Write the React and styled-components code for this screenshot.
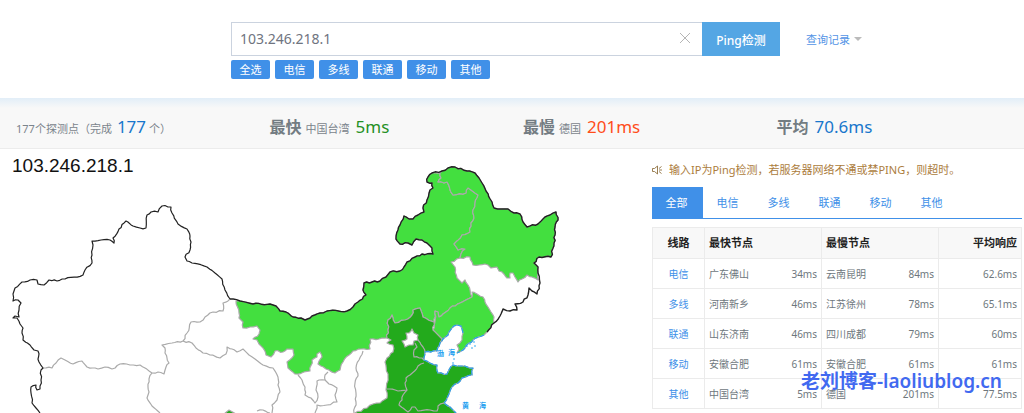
import React from "react";
import styled, { createGlobalStyle } from "styled-components";

const GlobalStyle = createGlobalStyle`
  * {
    box-sizing: border-box;
  }
  body {
    margin: 0;
    background: #fff;
    color: #7b848c;
    font-family: "Noto Sans", "Noto Sans CJK SC", sans-serif;
    font-size: 11px;
  }
  button,
  input {
    font-family: inherit;
  }
`;

const Header = styled.header`
  padding: 22px 16px 19px 231px;
`;

const SearchRow = styled.form`
  display: flex;
  align-items: center;
`;

const InputBox = styled.div`
  display: flex;
  align-items: center;
  flex: 0 1 471px;
  height: 34px;
  border: 1px solid #cbd3df;
  border-right: 0;
`;

const HostInput = styled.input`
  flex: 1;
  min-width: 0;
  height: 32px;
  padding: 0 8px 2px;
  border: 0;
  outline: none;
  background: none;
  color: #6f7480;
  font-size: 14px;
`;

const ClearButton = styled.button`
  display: flex;
  padding: 0 0 2px;
  margin-right: 11px;
  border: 0;
  background: none;
  cursor: pointer;
`;

const PingButton = styled.button`
  width: 78px;
  height: 34px;
  padding: 2px 0 0;
  border: 0;
  background: #54a6e4;
  color: #fff;
  font-size: 12px;
  font-weight: 500;
  cursor: pointer;
`;

const HistoryLink = styled.a`
  display: flex;
  align-items: center;
  gap: 4px;
  margin-left: 26px;
  color: #5394e6;
  text-decoration: none;

  &::after {
    content: "";
    border: 4px solid transparent;
    border-top-color: #bbb;
    border-bottom: 0;
  }
`;

const Tags = styled.div`
  display: flex;
  gap: 5px;
  margin-top: 4px;
`;

const Tag = styled.button`
  width: 39px;
  height: 19px;
  padding: 0;
  border: 0;
  border-radius: 2px;
  background: #4090e8;
  color: #fff;
  font-size: 11px;
  line-height: 19px;
  cursor: pointer;
`;

const Summary = styled.section`
  display: grid;
  grid-template-columns: repeat(4, 1fr);
  height: 51px;
  padding: 8px 10px 0 0;
  border-bottom: 1px solid #ececec;
  background: linear-gradient(#e2eef8, #f8f8f8 10px);
`;

const SummaryItem = styled.p`
  display: flex;
  align-items: baseline;
  gap: ${props => (props.$tight ? "3px" : "4px")};
  margin: 0;
  padding-left: 16px;
  line-height: 42px;
  white-space: nowrap;
`;

const Name = styled.strong`
  color: #737c82;
  font-size: 16px;
`;

const Value = styled.span`
  margin-left: 2px;
  color: ${props => props.$color};
  font-size: 17px;
`;

const Main = styled.main`
  display: flex;
  align-items: flex-start;
`;

const MapPanel = styled.section`
  position: relative;
  flex: 1;
  min-width: 0;
`;

const MapTitle = styled.h1`
  position: absolute;
  top: 5px;
  left: 12px;
  margin: 0;
  color: #111;
  font: 19px/24px "Liberation Sans", Arial, sans-serif;
`;

const MapSvg = styled.svg`
  display: block;
  width: 100%;
`;

const Panel = styled.section`
  position: relative;
  width: 370px;
  margin-right: 2px;
  padding-top: 12px;
`;

const Notice = styled.p`
  display: flex;
  align-items: center;
  gap: 7px;
  margin: 0 0 8px;
  color: #ac7c3c;
  line-height: 18px;
  white-space: nowrap;
`;

const TabBar = styled.div`
  display: flex;
  border-bottom: 1px solid #4090e8;
`;

const Tab = styled.button`
  width: 51px;
  height: 31px;
  padding: 0 2px 2px 0;
  border: 0;
  background: ${props => (props.$active ? "#4090e8" : "none")};
  color: ${props => (props.$active ? "#fff" : "#4090e8")};
  font-size: 11px;
  cursor: pointer;
`;

const Table = styled.table`
  width: 100%;
  margin-top: 8px;
  border-collapse: collapse;
  table-layout: fixed;

  th,
  td {
    height: 30px;
    padding: 0 4px;
    border: 1px solid #ebebeb;
    line-height: 16px;
  }
  th {
    height: 31px;
    background: #f8f8f8;
    color: #222;
    font-size: 11px;
    text-align: left;
  }
  td {
    color: #6e777d;
    font-size: 10px;
  }
  th:first-child,
  td:first-child {
    text-align: center;
  }
  th:last-child,
  td:last-child {
    text-align: right;
  }
`;

const Col = styled.col`
  width: ${props => props.$width};
`;

const LineLink = styled.a`
  color: #4090e8;
  text-decoration: none;
`;

const Node = styled.div`
  display: flex;
  justify-content: space-between;
`;

const Watermark = styled.div`
  position: absolute;
  right: 20px;
  bottom: 14px;
  color: #4169f0;
  font-size: 19px;
  font-weight: 600;
  line-height: 28px;
  white-space: nowrap;
`;

const lines = ["电信", "多线", "联通", "移动", "其他"];

const rows = [
  { line: "电信", fast: "广东佛山", min: "34ms", slow: "云南昆明", max: "84ms", avg: "62.6ms" },
  { line: "多线", fast: "河南新乡", min: "46ms", slow: "江苏徐州", max: "78ms", avg: "65.1ms" },
  { line: "联通", fast: "山东济南", min: "46ms", slow: "四川成都", max: "79ms", avg: "60ms" },
  { line: "移动", fast: "安徽合肥", min: "61ms", slow: "安徽合肥", max: "61ms", avg: "61ms" },
  { line: "其他", fast: "中国台湾", min: "5ms", slow: "德国", max: "201ms", avg: "77.5ms" }
];

const north =
  "M230 299L240 301L253 304L270 304L276 306L280 311L286 312L293 317L301 318L305 320L312 316L320 313L327 311L347 311L353 307L358 302L366 295L363 290L364 283L372 282L380 281L386 277L390 272L400 271L404 267L407 262L415 257L422 254L433 254L432 248L427 243L422 240L416 239L412 245L408 243L400 244L396 239L398 230L400 225L404 216L409 219L413 219L418 215L424 212L423 208L427 200L430 190L433 188L432 183L427 182L428 177L432 173L442 171L448 168L455 167L467 171L475 173L479 178L482 183L486 191L492 202L494 208L501 209L508 209L514 213L520 214L523 222L527 227L538 224L543 219L550 215L556 212L558 220L555 227L555 235L554 243L551 257L539 257L534 263L538 267L538 273L540 283L537 294L532 291L529 288L528 295L523 302L515 304L517 310L510 311L503 309L500 316L494 323L487 332";

const west =
  "M40 413L36 408L32 403L31 393L31 387L36 385L37 390L40 389L41 380L41 370L43 368L39 362L38 351L34 350L30 345L23 340L22 333L23 328L20 324L17 318L13 318L15 316L19 317L19 310L21 303L18 300L13 301L13 294L15 288L22 282L30 280L37 280L38 284L44 285L49 280L57 281L65 279L83 275L85 270L92 263L92 255L93 245L92 241L110 240L114 243L113 238L119 229L126 221L133 226L140 228L146 228L147 215L151 212L158 212L162 206L171 207L172 213L178 224L187 229L190 236L191 242L190 250L185 257L187 261L192 263L207 267L215 273L222 279L225 290L230 299";

const mongolia =
  "M236 301L240 301L253 304L270 304L276 306L280 311L286 312L293 317L301 318L305 320L312 316L320 313L327 311L347 311L353 307L358 302L366 295L363 290L364 283L372 282L380 281L386 277L390 272L400 271L404 267L407 262L415 257L422 254L433 254L432 248L427 243L422 240L416 239L412 245L408 243L400 244L396 239L398 230L400 225L404 216L409 219L413 219L418 215L424 212L423 208L427 200L430 190L433 188L432 183L427 182L428 177L432 173L440 173L441 178L438 182L444 183L447 182L450 190L453 195L466 193L468 188L478 195L475 203L473 210L474 218L471 223L470 232L462 235L454 244L458 250L465 249L461 254L460 258L451 262L455 267L457 278L462 283L465 280L468 285L470 290L472 297L460 303L450 308L443 314L439 317L438 312L435 311L434 322L423 317L420 308L413 310L412 315L405 320L395 323L392 315L388 320L388 330L387 338L379 339L370 339L370 349L361 349L353 351L349 355L343 362L340 370L335 373L326 369L318 364L322 357L320 352L317 354L317 357L312 360L310 371L304 372L295 374L288 368L287 362L294 355L293 349L287 349L283 352L275 351L271 357L266 355L263 348L259 344L257 340L253 339L259 334L260 330L257 326L250 327L243 328L243 322L239 318L239 313Z";

const heilongjiang =
  "M440 173L442 171L448 168L455 167L467 171L475 173L479 178L482 183L486 191L492 202L494 208L501 209L508 209L514 213L520 214L523 222L527 227L538 224L543 219L550 215L556 212L558 220L555 227L555 235L554 243L551 257L539 257L534 263L538 267L538 273L538 280L532 277L527 275L522 279L518 282L515 277L513 273L510 273L510 278L507 278L502 272L499 271L497 267L491 268L488 265L485 264L473 265L470 257L460 258L461 254L465 249L458 250L454 244L462 235L470 232L471 223L474 218L473 210L475 203L478 195L468 188L466 193L453 195L450 190L447 182L444 183L438 182L441 178Z";

const liaoning =
  "M472 292L477 294L483 297L485 302L488 307L491 312L494 317L494 323L487 332L484 335L473 340L469 343L465 348L457 353L459 349L457 345L462 340L463 333L461 326L457 325L452 328L448 335L440 343L442 339L433 330L435 322L435 311L438 312L439 317L443 314L450 308L460 303L472 297Z";

// Hebei, Shandong and Henan share one colour, so they are filled together
const plain =
  "M387 338L388 330L388 320L392 315L395 323L405 320L412 315L413 310L420 308L423 317L434 322L433 330L442 339L440 343L437 351L431 352L425 352L424 360L430 363L437 365L438 373L447 374L453 365L462 366L473 368L472 375L462 378L458 383L452 387L449 394L444 403L450 407L456 413L456 416L350 416L355 413L367 408L373 404L380 403L387 398L386 390L388 377L385 362L387 358L393 352L393 345L387 343L391 340Z";

const beijing =
  "M412 329L414 333L418 335L418 340L414 341L413 345L409 345L405 347L404 344L402 341L407 339L406 333L409 333Z";

const borders = [
  "M43 368L52 368L56 363L61 358L65 360L73 364L82 361L87 367L98 369L105 367L112 369L120 364L130 365L140 365L152 373L158 372L164 374L166 367L169 363L165 353L165 348L162 345L172 343L183 341L187 333L191 322L200 322L205 317L213 312L223 311L223 303L230 299",
  "M183 341L192 343L196 348L203 353L210 355L220 358L226 354L227 347L232 349L237 352L243 349L249 355L255 359L263 365L273 368L278 377L278 385L280 392L277 400L272 405L272 413",
  "M152 373L149 379L148 387L149 392L147 398L152 406L160 413",
  "M298 375L302 380L305 387L305 395L311 398L315 403L318 397L316 390L317 381L319 380L325 380L329 384L337 388L335 395L337 402L327 405L317 405L315 413",
  "M325 380L325 375L328 372",
  "M363 351L359 360L356 368L358 376L355 383L356 393L356 402L354 413",
  "M257 411L263 410L270 413",
  "M424 363L418 366L410 375L406 378L405 383L407 390L398 391L387 389",
  "M407 390L403 395L402 400L399 405L408 412L412 407L415 407L418 411L430 410L437 411L438 406L444 403",
  "M418 340L423 347L425 352M415 343L417 347L414 350L414 357L422 358L424 360"
];

const coast =
  "M484 335L473 340L469 343L465 348L457 353M463 333L461 326L457 325L452 328L448 335L440 343L437 351L431 352L425 352L424 360L430 363L437 365L438 373L447 374L453 365L462 366L473 368L472 375L462 378L458 383L452 387L449 394L444 403L450 407L456 413";

const islands = [[467, 346], [470, 344], [474, 342], [472, 348], [475, 346], [430, 352], [454, 359], [453, 363]];

const seas = [
  { text: "渤", x: 437, y: 356 },
  { text: "海", x: 448, y: 355 },
  { text: "黄", x: 462, y: 408 },
  { text: "海", x: 479, y: 408 }
];

// Adds small kinks to each segment. The kinks depend only on the two end
// points, so provinces that share a border still fit together.
const roughen = d =>
  d.replace(/M[^M]+/g, part => {
    const closed = part.endsWith("Z");
    const points = part
      .replace(/[MZ]/g, "")
      .split("L")
      .map(pair => pair.split(" ").map(Number));
    if (closed) points.push(points[0]);
    let out = `M${points[0].join(" ")}`;
    for (let i = 1; i < points.length; i++) {
      const [ax, ay] = points[i - 1];
      const [bx, by] = points[i];
      const dx = Math.abs(bx - ax);
      const dy = Math.abs(by - ay);
      const steps = Math.max(1, Math.round(Math.hypot(dx, dy) / 3));
      for (let s = 1; s < steps; s++) {
        const x = ax + ((bx - ax) * s) / steps;
        const y = ay + ((by - ay) * s) / steps;
        const kink = Math.sin(x * 12.9 + y * 78.2) * 0.8;
        const len = Math.hypot(dx, dy);
        out += `L${(x + (kink * dy) / len).toFixed(1)} ${(y + (kink * dx) / len).toFixed(1)}`;
      }
      out += `L${bx} ${by}`;
    }
    return closed ? `${out}Z` : out;
  });

const ChinaMap = () => (
  <MapSvg viewBox="0 149 652 264" role="img" aria-label="103.246.218.1">
    <g fill="none" stroke="#aaa" strokeWidth="1.2" strokeLinejoin="round">
      <path d={roughen(mongolia)} fill="#43df3f" />
      <path d={roughen(heilongjiang)} fill="#43df3f" />
      <path d={roughen(liaoning)} fill="#43df3f" />
      <path d={roughen(plain)} fill="#23aa1c" />
      <path d={roughen(beijing)} fill="#fff" />
      <path d="M224 414L229 410L236 414Z" fill="#23aa1c" />
      {borders.map(d => (
        <path key={d} d={roughen(d)} />
      ))}
      <path d={roughen(west)} stroke="#222" strokeWidth="1.2" />
      <path d={roughen(north)} stroke="#222" strokeWidth="1.4" />
      <path d={roughen(coast)} stroke="#2ba0ec" strokeWidth="1.2" strokeDasharray="5 1" />
    </g>
    <g fill="#1e9ff0">
      {islands.map(([x, y]) => (
        <circle key={`${x}-${y}`} cx={x} cy={y} r="0.8" />
      ))}
      {seas.map(sea => (
        <text key={sea.x} x={sea.x} y={sea.y} fontSize="7" fontWeight="700">
          {sea.text}
        </text>
      ))}
    </g>
  </MapSvg>
);

class App extends React.Component {
  state = {
    host: "103.246.218.1",
    tab: "全部"
  };
  render() {
    const { host, tab } = this.state;
    return (
      <>
        <GlobalStyle />
        <Header>
          <SearchRow onSubmit={e => e.preventDefault()}>
            <InputBox>
              <HostInput
                type="text"
                aria-label="Ping检测"
                value={host}
                onChange={e => this.setState({ host: e.target.value })}
              />
              <ClearButton type="button" aria-label="×" onClick={() => this.setState({ host: "" })}>
                <svg width="12" height="12" viewBox="0 0 12 12" stroke="#b5b5b5">
                  <path d="M1 1L11 11M11 1L1 11" />
                </svg>
              </ClearButton>
            </InputBox>
            <PingButton type="submit">Ping检测</PingButton>
            <HistoryLink href="#history">查询记录</HistoryLink>
          </SearchRow>
          <Tags>
            {["全选", ...lines].map(name => (
              <Tag key={name} type="button">
                {name}
              </Tag>
            ))}
          </Tags>
        </Header>
        <Summary>
          <SummaryItem $tight>
            <span>177个探测点（完成</span>
            <Value $color="#1877cc">177</Value>
            <span>个）</span>
          </SummaryItem>
          <SummaryItem>
            <Name>最快</Name>
            <span>中国台湾</span>
            <Value $color="#259024">5ms</Value>
          </SummaryItem>
          <SummaryItem>
            <Name>最慢</Name>
            <span>德国</span>
            <Value $color="#ff4d1a">201ms</Value>
          </SummaryItem>
          <SummaryItem>
            <Name>平均</Name>
            <Value $color="#1877cc">70.6ms</Value>
          </SummaryItem>
        </Summary>
        <Main>
          <MapPanel>
            <MapTitle>103.246.218.1</MapTitle>
            <ChinaMap />
          </MapPanel>
          <Panel>
            <Notice>
              <svg width="10" height="10" viewBox="0 0 10 10" fill="none" stroke="#8f7040" strokeWidth="0.9">
                <path d="M0.5 3.5H2.5L5.5 1V9L2.5 6.5H0.5Z" />
                <path d="M7 3.5L9.5 1.5M7 5H10M7 6.5L9.5 8.5" />
              </svg>
              输入IP为Ping检测，若服务器网络不通或禁PING，则超时。
            </Notice>
            <TabBar role="tablist">
              {["全部", ...lines].map(name => (
                <Tab
                  key={name}
                  type="button"
                  role="tab"
                  aria-selected={tab === name}
                  $active={tab === name}
                  onClick={() => this.setState({ tab: name })}
                >
                  {name}
                </Tab>
              ))}
            </TabBar>
            <Table>
              <colgroup>
                <Col $width="52px" />
                <Col $width="117px" />
                <Col $width="117px" />
                <Col $width="auto" />
              </colgroup>
              <thead>
                <tr>
                  <th>线路</th>
                  <th>最快节点</th>
                  <th>最慢节点</th>
                  <th>平均响应</th>
                </tr>
              </thead>
              <tbody>
                {rows.map(row => (
                  <tr key={row.line}>
                    <td>
                      <LineLink href="#line">{row.line}</LineLink>
                    </td>
                    <td>
                      <Node>
                        <span>{row.fast}</span>
                        <span>{row.min}</span>
                      </Node>
                    </td>
                    <td>
                      <Node>
                        <span>{row.slow}</span>
                        <span>{row.max}</span>
                      </Node>
                    </td>
                    <td>{row.avg}</td>
                  </tr>
                ))}
              </tbody>
            </Table>
            <Watermark>老刘博客-laoliublog.cn</Watermark>
          </Panel>
        </Main>
      </>
    );
  }
}

export default App;
